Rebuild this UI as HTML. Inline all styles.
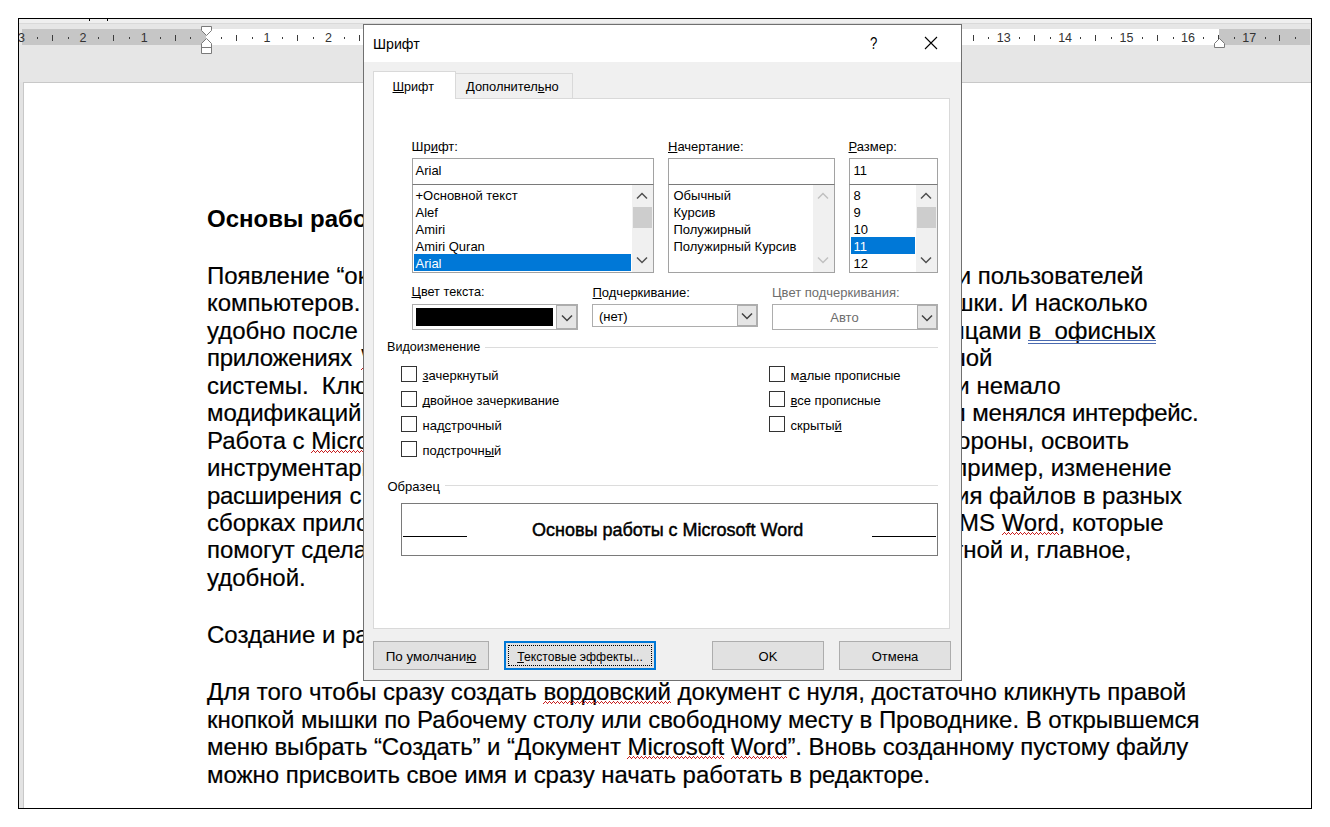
<!DOCTYPE html>
<html><head><meta charset="utf-8"><style>
html,body{margin:0;padding:0;width:1330px;height:827px;overflow:hidden;background:#fff;}
body{position:relative;font-family:'Liberation Sans', sans-serif;}
.b{position:absolute;}
.t{position:absolute;white-space:nowrap;font-family:'Liberation Sans', sans-serif;}
.rn{position:absolute;top:30px;width:40px;text-align:center;font-size:12.5px;line-height:16px;color:#333;font-family:'Liberation Sans', sans-serif;}
u{text-decoration:underline;text-underline-offset:1px;text-decoration-skip-ink:none;}
.wv{position:relative;}
.wv::after{content:'';position:absolute;left:0;right:0;top:23px;height:3px;background:repeating-linear-gradient(90deg,transparent 0 2px,#c81e1e 2px 3px,transparent 3px 4px) 0 0/100% 1px no-repeat,repeating-linear-gradient(90deg,transparent 0 1px,#c81e1e 1px 2px,transparent 2px 3px,#c81e1e 3px 4px) 0 1px/100% 1px no-repeat,repeating-linear-gradient(90deg,#c81e1e 0 1px,transparent 1px 4px) 0 2px/100% 1px no-repeat;}
.du{position:relative;}
.du::after{content:'';position:absolute;left:0;right:0;top:23px;height:4px;border-top:1px solid #4a6ab0;border-bottom:1px solid #4a6ab0;box-sizing:border-box;}
</style></head><body>
<div class="b" style="left:18px;top:18px;width:1294px;height:791px;background:#fff;"></div><div class="b" style="left:19px;top:19px;width:1292px;height:5px;background:#efefef;"></div><div class="b" style="left:19px;top:23px;width:1292px;height:1px;background:#d9d9d9;"></div><div class="b" style="left:19px;top:24px;width:1292px;height:58px;background:#e6e6e6;"></div><div class="b" style="left:22px;top:29px;width:184px;height:16px;background:#c6c6c6;"></div><div class="b" style="left:206px;top:29px;width:1013px;height:16px;background:#fff;"></div><div class="b" style="left:1219px;top:29px;width:91px;height:16px;background:#c6c6c6;"></div><div class="b" style="left:19px;top:82px;width:1292px;height:726px;background:#fff;"></div><div class="b" style="left:19px;top:82px;width:4px;height:726px;background:#e3e3e3;"></div><div class="b" style="left:23px;top:82px;width:1px;height:726px;background:#c8c8c8;"></div><div class="b" style="left:23px;top:82px;width:1288px;height:1px;background:#c8c8c8;"></div><div class="b" style="left:18px;top:18px;width:1294px;height:1px;background:#000;"></div><div class="b" style="left:18px;top:808px;width:1294px;height:1px;background:#000;"></div><div class="b" style="left:18px;top:18px;width:1px;height:791px;background:#000;"></div><div class="b" style="left:1311px;top:18px;width:1px;height:791px;background:#000;"></div><div class="b" style="left:89px;top:19px;width:1px;height:2px;background:#000;"></div><div class="b" style="left:107px;top:19px;width:1px;height:2px;background:#000;"></div><div class="b" style="left:19px;top:19px;width:1292px;height:40px;overflow:hidden;"><div class="b" style="left:-19px;top:-19px;width:1330px;height:60px;"><div class="rn" style="left:1.5px;">3</div><div class="b" style="left:37px;top:37px;width:1px;height:2px;background:#3c3c3c;"></div><div class="b" style="left:52px;top:35px;width:1px;height:6px;background:#3c3c3c;"></div><div class="b" style="left:68px;top:37px;width:1px;height:2px;background:#3c3c3c;"></div><div class="rn" style="left:62.9px;">2</div><div class="b" style="left:98px;top:37px;width:1px;height:2px;background:#3c3c3c;"></div><div class="b" style="left:113px;top:35px;width:1px;height:6px;background:#3c3c3c;"></div><div class="b" style="left:129px;top:37px;width:1px;height:2px;background:#3c3c3c;"></div><div class="rn" style="left:124.3px;">1</div><div class="b" style="left:160px;top:37px;width:1px;height:2px;background:#3c3c3c;"></div><div class="b" style="left:175px;top:35px;width:1px;height:6px;background:#3c3c3c;"></div><div class="b" style="left:190px;top:37px;width:1px;height:2px;background:#3c3c3c;"></div><div class="b" style="left:221px;top:37px;width:1px;height:2px;background:#3c3c3c;"></div><div class="b" style="left:236px;top:35px;width:1px;height:6px;background:#3c3c3c;"></div><div class="b" style="left:252px;top:37px;width:1px;height:2px;background:#3c3c3c;"></div><div class="rn" style="left:247.1px;">1</div><div class="b" style="left:282px;top:37px;width:1px;height:2px;background:#3c3c3c;"></div><div class="b" style="left:297px;top:35px;width:1px;height:6px;background:#3c3c3c;"></div><div class="b" style="left:313px;top:37px;width:1px;height:2px;background:#3c3c3c;"></div><div class="rn" style="left:308.5px;">2</div><div class="b" style="left:344px;top:37px;width:1px;height:2px;background:#3c3c3c;"></div><div class="b" style="left:359px;top:35px;width:1px;height:6px;background:#3c3c3c;"></div><div class="b" style="left:375px;top:37px;width:1px;height:2px;background:#3c3c3c;"></div><div class="rn" style="left:369.9px;">3</div><div class="b" style="left:405px;top:37px;width:1px;height:2px;background:#3c3c3c;"></div><div class="b" style="left:420px;top:35px;width:1px;height:6px;background:#3c3c3c;"></div><div class="b" style="left:436px;top:37px;width:1px;height:2px;background:#3c3c3c;"></div><div class="rn" style="left:431.2px;">4</div><div class="b" style="left:467px;top:37px;width:1px;height:2px;background:#3c3c3c;"></div><div class="b" style="left:481px;top:35px;width:1px;height:6px;background:#3c3c3c;"></div><div class="b" style="left:497px;top:37px;width:1px;height:2px;background:#3c3c3c;"></div><div class="rn" style="left:492.6px;">5</div><div class="b" style="left:528px;top:37px;width:1px;height:2px;background:#3c3c3c;"></div><div class="b" style="left:543px;top:35px;width:1px;height:6px;background:#3c3c3c;"></div><div class="b" style="left:559px;top:37px;width:1px;height:2px;background:#3c3c3c;"></div><div class="rn" style="left:554.0px;">6</div><div class="b" style="left:589px;top:37px;width:1px;height:2px;background:#3c3c3c;"></div><div class="b" style="left:604px;top:35px;width:1px;height:6px;background:#3c3c3c;"></div><div class="b" style="left:620px;top:37px;width:1px;height:2px;background:#3c3c3c;"></div><div class="rn" style="left:615.4px;">7</div><div class="b" style="left:651px;top:37px;width:1px;height:2px;background:#3c3c3c;"></div><div class="b" style="left:666px;top:35px;width:1px;height:6px;background:#3c3c3c;"></div><div class="b" style="left:681px;top:37px;width:1px;height:2px;background:#3c3c3c;"></div><div class="rn" style="left:676.8px;">8</div><div class="b" style="left:712px;top:37px;width:1px;height:2px;background:#3c3c3c;"></div><div class="b" style="left:727px;top:35px;width:1px;height:6px;background:#3c3c3c;"></div><div class="b" style="left:743px;top:37px;width:1px;height:2px;background:#3c3c3c;"></div><div class="rn" style="left:738.2px;">9</div><div class="b" style="left:774px;top:37px;width:1px;height:2px;background:#3c3c3c;"></div><div class="b" style="left:788px;top:35px;width:1px;height:6px;background:#3c3c3c;"></div><div class="b" style="left:804px;top:37px;width:1px;height:2px;background:#3c3c3c;"></div><div class="rn" style="left:799.5px;">10</div><div class="b" style="left:835px;top:37px;width:1px;height:2px;background:#3c3c3c;"></div><div class="b" style="left:850px;top:35px;width:1px;height:6px;background:#3c3c3c;"></div><div class="b" style="left:866px;top:37px;width:1px;height:2px;background:#3c3c3c;"></div><div class="rn" style="left:860.9px;">11</div><div class="b" style="left:896px;top:37px;width:1px;height:2px;background:#3c3c3c;"></div><div class="b" style="left:911px;top:35px;width:1px;height:6px;background:#3c3c3c;"></div><div class="b" style="left:927px;top:37px;width:1px;height:2px;background:#3c3c3c;"></div><div class="rn" style="left:922.3px;">12</div><div class="b" style="left:958px;top:37px;width:1px;height:2px;background:#3c3c3c;"></div><div class="b" style="left:973px;top:35px;width:1px;height:6px;background:#3c3c3c;"></div><div class="b" style="left:988px;top:37px;width:1px;height:2px;background:#3c3c3c;"></div><div class="rn" style="left:983.7px;">13</div><div class="b" style="left:1019px;top:37px;width:1px;height:2px;background:#3c3c3c;"></div><div class="b" style="left:1034px;top:35px;width:1px;height:6px;background:#3c3c3c;"></div><div class="b" style="left:1050px;top:37px;width:1px;height:2px;background:#3c3c3c;"></div><div class="rn" style="left:1045.1px;">14</div><div class="b" style="left:1080px;top:37px;width:1px;height:2px;background:#3c3c3c;"></div><div class="b" style="left:1095px;top:35px;width:1px;height:6px;background:#3c3c3c;"></div><div class="b" style="left:1111px;top:37px;width:1px;height:2px;background:#3c3c3c;"></div><div class="rn" style="left:1106.5px;">15</div><div class="b" style="left:1142px;top:37px;width:1px;height:2px;background:#3c3c3c;"></div><div class="b" style="left:1157px;top:35px;width:1px;height:6px;background:#3c3c3c;"></div><div class="b" style="left:1173px;top:37px;width:1px;height:2px;background:#3c3c3c;"></div><div class="rn" style="left:1167.9px;">16</div><div class="b" style="left:1203px;top:37px;width:1px;height:2px;background:#3c3c3c;"></div><div class="b" style="left:1218px;top:35px;width:1px;height:6px;background:#3c3c3c;"></div><div class="b" style="left:1234px;top:37px;width:1px;height:2px;background:#3c3c3c;"></div><div class="rn" style="left:1229.2px;">17</div><div class="b" style="left:1265px;top:37px;width:1px;height:2px;background:#3c3c3c;"></div><div class="b" style="left:1279px;top:35px;width:1px;height:6px;background:#3c3c3c;"></div><div class="b" style="left:1295px;top:37px;width:1px;height:2px;background:#3c3c3c;"></div></div></div><svg class="b" style="left:199px;top:24px;" width="16" height="32" viewBox="0 0 16 32">
<path d="M2.5 2.5 H12.5 V6.5 L7.5 11.5 L2.5 6.5 Z" fill="#fff" stroke="#7a7a7a" stroke-width="1" stroke-linejoin="miter"/>
<path d="M7.5 14.5 L12.5 19.5 V29.5 H2.5 V19.5 Z" fill="#fff" stroke="#7a7a7a" stroke-width="1"/>
<path d="M2.5 23.5 H12.5" fill="none" stroke="#7a7a7a" stroke-width="1"/>
</svg><svg class="b" style="left:1212px;top:34px;" width="16" height="16" viewBox="0 0 16 16">
<path d="M7.5 4.5 L12.5 9.5 V13.5 H2.5 V9.5 Z" fill="#fff" stroke="#7a7a7a" stroke-width="1"/>
</svg><div class="t " style="left:207px;top:206.68px;font-size:24px;line-height:24px;font-weight:bold;color:#000;white-space:pre;">Основы работы с Microsoft Word</div><div class="t " style="left:207px;top:263.68px;font-size:24px;line-height:24px;font-weight:normal;color:#000;white-space:pre;-webkit-text-stroke:0.2px #000;letter-spacing:-0.04px;">Появление “окон” в</div><div class="t " style="left:207px;top:290.68px;font-size:24px;line-height:24px;font-weight:normal;color:#000;white-space:pre;-webkit-text-stroke:0.2px #000;letter-spacing:-0.04px;">компьютеров. Удобство</div><div class="t " style="left:207px;top:318.68px;font-size:24px;line-height:24px;font-weight:normal;color:#000;white-space:pre;-webkit-text-stroke:0.2px #000;letter-spacing:-0.04px;">удобно после работы</div><div class="t " style="left:207px;top:345.68px;font-size:24px;line-height:24px;font-weight:normal;color:#000;white-space:pre;-webkit-text-stroke:0.2px #000;letter-spacing:-0.3px;word-spacing:3px;">приложениях <span class="wv">Windows</span></div><div class="t " style="left:207px;top:373.68px;font-size:24px;line-height:24px;font-weight:normal;color:#000;white-space:pre;-webkit-text-stroke:0.2px #000;letter-spacing:-0.04px;">системы.  Ключевой</div><div class="t " style="left:207px;top:400.68px;font-size:24px;line-height:24px;font-weight:normal;color:#000;white-space:pre;-webkit-text-stroke:0.2px #000;letter-spacing:-0.04px;">модификаций. Изменялся</div><div class="t " style="left:207px;top:428.68px;font-size:24px;line-height:24px;font-weight:normal;color:#000;white-space:pre;-webkit-text-stroke:0.2px #000;letter-spacing:-0.04px;">Работа с <span class="wv">Microsoft</span> Word</div><div class="t " style="left:207px;top:455.68px;font-size:24px;line-height:24px;font-weight:normal;color:#000;white-space:pre;-webkit-text-stroke:0.2px #000;letter-spacing:-0.04px;">инструментарий</div><div class="t " style="left:207px;top:483.68px;font-size:24px;line-height:24px;font-weight:normal;color:#000;white-space:pre;-webkit-text-stroke:0.2px #000;letter-spacing:-0.3px;word-spacing:-2.5px;">расширения  с помощью</div><div class="t " style="left:207px;top:510.68px;font-size:24px;line-height:24px;font-weight:normal;color:#000;white-space:pre;-webkit-text-stroke:0.2px #000;letter-spacing:-0.04px;">сборках приложения</div><div class="t " style="left:207px;top:537.68px;font-size:24px;line-height:24px;font-weight:normal;color:#000;white-space:pre;-webkit-text-stroke:0.2px #000;letter-spacing:-0.04px;">помогут сделать</div><div class="t " style="left:207px;top:565.68px;font-size:24px;line-height:24px;font-weight:normal;color:#000;white-space:pre;-webkit-text-stroke:0.2px #000;letter-spacing:-0.04px;">удобной.</div><div class="t" style="right:186.5px;top:263.68px;font-size:24px;line-height:24px;font-weight:normal;color:#000;white-space:pre;-webkit-text-stroke:0.2px #000;">изменило жизни пользователей</div><div class="t" style="right:182.5px;top:290.68px;font-size:24px;line-height:24px;font-weight:normal;color:#000;white-space:pre;-webkit-text-stroke:0.2px #000;">работы мышки. И насколько</div><div class="t" style="right:174.5px;top:318.68px;font-size:24px;line-height:24px;font-weight:normal;color:#000;white-space:pre;-webkit-text-stroke:0.2px #000;">с таблицами <span class="du">в  офисных</span></div><div class="t" style="right:337.5px;top:345.68px;font-size:24px;line-height:24px;font-weight:normal;color:#000;white-space:pre;-webkit-text-stroke:0.2px #000;">операционной</div><div class="t" style="right:269.5px;top:373.68px;font-size:24px;line-height:24px;font-weight:normal;color:#000;white-space:pre;-webkit-text-stroke:0.2px #000;">претерпел и немало</div><div class="t" style="right:131.5px;top:400.68px;font-size:24px;line-height:24px;font-weight:normal;color:#000;white-space:pre;-webkit-text-stroke:0.2px #000;">версиями <span style="letter-spacing:-0.27px">менялся интерфейс.</span></div><div class="t" style="right:201px;top:428.68px;font-size:24px;line-height:24px;font-weight:normal;color:#000;white-space:pre;-webkit-text-stroke:0.2px #000;">с другой стороны, освоить</div><div class="t" style="right:158.5px;top:455.68px;font-size:24px;line-height:24px;font-weight:normal;color:#000;white-space:pre;-webkit-text-stroke:0.2px #000;">например, изменение</div><div class="t" style="right:148px;top:483.68px;font-size:24px;line-height:24px;font-weight:normal;color:#000;white-space:pre;-webkit-text-stroke:0.2px #000;">сохранения файлов в разных</div><div class="t" style="right:166.5px;top:510.68px;font-size:24px;line-height:24px;font-weight:normal;color:#000;white-space:pre;-webkit-text-stroke:0.2px #000;">версиях MS <span class="wv">Word</span>, которые</div><div class="t" style="right:198.5px;top:537.68px;font-size:24px;line-height:24px;font-weight:normal;color:#000;white-space:pre;-webkit-text-stroke:0.2px #000;">работу приятной и, главное,</div><div class="t " style="left:207px;top:622.68px;font-size:24px;line-height:24px;font-weight:normal;color:#000;white-space:pre;-webkit-text-stroke:0.2px #000;">Создание и работа с документом</div><div class="t " style="left:207px;top:679.68px;font-size:24px;line-height:24px;font-weight:normal;color:#000;white-space:pre;-webkit-text-stroke:0.2px #000;letter-spacing:-0.024px;">Для того чтобы сразу создать <span class="wv">вордовский</span> документ с нуля, достаточно кликнуть правой</div><div class="t " style="left:207px;top:707.68px;font-size:24px;line-height:24px;font-weight:normal;color:#000;white-space:pre;-webkit-text-stroke:0.2px #000;letter-spacing:-0.050px;">кнопкой мышки по Рабочему столу или свободному месту в Проводнике. В открывшемся</div><div class="t " style="left:207px;top:734.68px;font-size:24px;line-height:24px;font-weight:normal;color:#000;white-space:pre;-webkit-text-stroke:0.2px #000;letter-spacing:-0.070px;">меню выбрать “Создать” и “Документ <span class="wv">Microsoft</span> <span class="wv">Word</span>”. Вновь созданному пустому файлу</div><div class="t " style="left:207px;top:762.68px;font-size:24px;line-height:24px;font-weight:normal;color:#000;white-space:pre;-webkit-text-stroke:0.2px #000;letter-spacing:-0.033px;">можно присвоить свое имя и сразу начать работать в редакторе.</div><div class="b" style="left:363px;top:24px;width:599px;height:657px;background:#f0f0f0;border:1px solid #707070;box-sizing:border-box;"></div><div class="b" style="left:364px;top:25px;width:597px;height:37px;background:#fff;"></div><div class="t " style="left:373px;top:36.98px;font-size:14.2px;line-height:14.2px;font-weight:normal;color:#000;">Шрифт</div><div class="t " style="left:870px;top:35.03px;font-size:16.5px;line-height:16.5px;font-weight:normal;color:#000;transform:scaleX(0.8);transform-origin:0 0;">?</div><svg class="b" style="left:924px;top:36px;" width="14" height="14" viewBox="0 0 14 14">
<path d="M1 1 L13 13 M13 1 L1 13" stroke="#000" stroke-width="1.1" fill="none"/></svg><div class="b" style="left:373px;top:98px;width:577px;height:531px;background:#fff;border:1px solid #d9d9d9;box-sizing:border-box;"></div><div class="b" style="left:455px;top:73px;width:118px;height:26px;background:#f0f0f0;border:1px solid #d9d9d9;box-sizing:border-box;"></div><div class="b" style="left:373px;top:71px;width:83px;height:28px;background:#fff;border:1px solid #d9d9d9;border-bottom:none;box-sizing:border-box;"></div><div class="t " style="left:392.5px;top:81.33px;font-size:12.6px;line-height:12.6px;font-weight:normal;color:#000;"><u>Ш</u>рифт</div><div class="t " style="left:466px;top:81.08px;font-size:12.9px;line-height:12.9px;font-weight:normal;color:#000;">Дополнител<u>ь</u>но</div><div class="t " style="left:411.5px;top:140.00px;font-size:13px;line-height:13px;font-weight:normal;color:#000;">Шр<u>и</u>фт:</div><div class="t " style="left:668px;top:140.00px;font-size:13px;line-height:13px;font-weight:normal;color:#000;"><u>Н</u>ачертание:</div><div class="t " style="left:848.5px;top:140.00px;font-size:13px;line-height:13px;font-weight:normal;color:#000;"><u>Р</u>азмер:</div><div class="b" style="left:412px;top:158px;width:242px;height:27px;background:#fff;border:1px solid #a2a2a2;border-bottom-color:#7a7a7a;box-sizing:border-box;"></div><div class="t " style="left:415.5px;top:164.00px;font-size:13px;line-height:13px;font-weight:normal;color:#000;">Arial</div><div class="b" style="left:412px;top:185px;width:242px;height:88px;background:#fff;border:1px solid #a2a2a2;border-top:none;box-sizing:border-box;"></div><div class="b" style="left:668px;top:158px;width:167px;height:27px;background:#fff;border:1px solid #a2a2a2;border-bottom-color:#7a7a7a;box-sizing:border-box;"></div><div class="b" style="left:668px;top:185px;width:167px;height:88px;background:#fff;border:1px solid #a2a2a2;border-top:none;box-sizing:border-box;"></div><div class="b" style="left:849px;top:158px;width:89px;height:27px;background:#fff;border:1px solid #a2a2a2;border-bottom-color:#7a7a7a;box-sizing:border-box;"></div><div class="t " style="left:853.5px;top:164.00px;font-size:13px;line-height:13px;font-weight:normal;color:#000;">11</div><div class="b" style="left:849px;top:185px;width:89px;height:88px;background:#fff;border:1px solid #a2a2a2;border-top:none;box-sizing:border-box;"></div><div class="b" style="left:414px;top:254px;width:217px;height:17px;background:#0078d7;"></div><div class="t " style="left:415.5px;top:189.00px;font-size:13px;line-height:13px;font-weight:normal;color:#000;">+Основной текст</div><div class="t " style="left:415.5px;top:206.00px;font-size:13px;line-height:13px;font-weight:normal;color:#000;">Alef</div><div class="t " style="left:415.5px;top:223.00px;font-size:13px;line-height:13px;font-weight:normal;color:#000;">Amiri</div><div class="t " style="left:415.5px;top:240.00px;font-size:13px;line-height:13px;font-weight:normal;color:#000;">Amiri Quran</div><div class="t " style="left:415.5px;top:257.00px;font-size:13px;line-height:13px;font-weight:normal;color:#fff;">Arial</div><div class="b" style="left:632px;top:185px;width:21px;height:87px;background:#f0f0f0;"></div><div class="b" style="left:633px;top:207px;width:19px;height:21px;background:#cdcdcd;"></div><svg class="b" style="left:636px;top:192px;" width="12" height="8" viewBox="0 0 12 8"><path d="M1 6.5 L6 1.5 L11 6.5" stroke="#505050" stroke-width="1.5" fill="none"/></svg><svg class="b" style="left:636px;top:256px;" width="12" height="8" viewBox="0 0 12 8"><path d="M1 1.5 L6 6.5 L11 1.5" stroke="#505050" stroke-width="1.5" fill="none"/></svg><div class="t " style="left:673.5px;top:189.00px;font-size:13px;line-height:13px;font-weight:normal;color:#000;">Обычный</div><div class="t " style="left:673.5px;top:206.00px;font-size:13px;line-height:13px;font-weight:normal;color:#000;">Курсив</div><div class="t " style="left:673.5px;top:223.00px;font-size:13px;line-height:13px;font-weight:normal;color:#000;">Полужирный</div><div class="t " style="left:673.5px;top:240.00px;font-size:13px;line-height:13px;font-weight:normal;color:#000;">Полужирный Курсив</div><div class="b" style="left:813px;top:185px;width:21px;height:87px;background:#f0f0f0;"></div><svg class="b" style="left:817px;top:192px;" width="12" height="8" viewBox="0 0 12 8"><path d="M1 6.5 L6 1.5 L11 6.5" stroke="#c0c0c0" stroke-width="1.5" fill="none"/></svg><svg class="b" style="left:817px;top:256px;" width="12" height="8" viewBox="0 0 12 8"><path d="M1 1.5 L6 6.5 L11 1.5" stroke="#c0c0c0" stroke-width="1.5" fill="none"/></svg><div class="b" style="left:851px;top:237px;width:64px;height:17px;background:#0078d7;"></div><div class="t " style="left:853.5px;top:189.00px;font-size:13px;line-height:13px;font-weight:normal;color:#000;">8</div><div class="t " style="left:853.5px;top:206.00px;font-size:13px;line-height:13px;font-weight:normal;color:#000;">9</div><div class="t " style="left:853.5px;top:223.00px;font-size:13px;line-height:13px;font-weight:normal;color:#000;">10</div><div class="t " style="left:853.5px;top:240.00px;font-size:13px;line-height:13px;font-weight:normal;color:#fff;">11</div><div class="t " style="left:853.5px;top:257.00px;font-size:13px;line-height:13px;font-weight:normal;color:#000;">12</div><div class="b" style="left:916px;top:185px;width:21px;height:87px;background:#f0f0f0;"></div><div class="b" style="left:917px;top:207px;width:19px;height:21px;background:#cdcdcd;"></div><svg class="b" style="left:920px;top:192px;" width="12" height="8" viewBox="0 0 12 8"><path d="M1 6.5 L6 1.5 L11 6.5" stroke="#505050" stroke-width="1.5" fill="none"/></svg><svg class="b" style="left:920px;top:256px;" width="12" height="8" viewBox="0 0 12 8"><path d="M1 1.5 L6 6.5 L11 1.5" stroke="#505050" stroke-width="1.5" fill="none"/></svg><div class="t " style="left:411.5px;top:286.25px;font-size:12.7px;line-height:12.7px;font-weight:normal;color:#000;"><u>Ц</u>вет текста:</div><div class="t " style="left:592.5px;top:286.00px;font-size:13px;line-height:13px;font-weight:normal;color:#000;"><u>П</u>одчеркивание:</div><div class="t " style="left:772px;top:286.00px;font-size:13px;line-height:13px;font-weight:normal;color:#6d6d6d;">Цвет подчеркивания:</div><div class="b" style="left:412px;top:304px;width:166px;height:26px;background:#fff;border:1px solid #adadad;box-sizing:border-box;"></div><div class="b" style="left:416px;top:308px;width:137px;height:18px;background:#000;"></div><div class="b" style="left:556px;top:305px;width:21px;height:24px;background:#e5e5e5;border:1px solid #adadad;box-sizing:border-box;"></div><svg class="b" style="left:561px;top:314px;" width="12" height="8" viewBox="0 0 12 8"><path d="M1 1.5 L6 6.5 L11 1.5" stroke="#404040" stroke-width="1.5" fill="none"/></svg><div class="b" style="left:592px;top:304px;width:166px;height:23px;background:#fff;border:1px solid #adadad;box-sizing:border-box;"></div><div class="t " style="left:599px;top:310.00px;font-size:13px;line-height:13px;font-weight:normal;color:#000;">(нет)</div><div class="b" style="left:737px;top:305px;width:20px;height:21px;background:#e5e5e5;border:1px solid #adadad;box-sizing:border-box;"></div><svg class="b" style="left:741px;top:312px;" width="12" height="8" viewBox="0 0 12 8"><path d="M1 1.5 L6 6.5 L11 1.5" stroke="#404040" stroke-width="1.5" fill="none"/></svg><div class="b" style="left:772px;top:304px;width:166px;height:26px;background:#fff;border:1px solid #adadad;box-sizing:border-box;"></div><div class="t" style="left:772px;width:145px;text-align:center;top:311.00px;font-size:13px;line-height:13px;color:#6d6d6d;">Авто</div><div class="b" style="left:917px;top:305px;width:20px;height:24px;background:#e5e5e5;border:1px solid #adadad;box-sizing:border-box;"></div><svg class="b" style="left:921px;top:314px;" width="12" height="8" viewBox="0 0 12 8"><path d="M1 1.5 L6 6.5 L11 1.5" stroke="#404040" stroke-width="1.5" fill="none"/></svg><div class="t " style="left:387px;top:341.33px;font-size:12.6px;line-height:12.6px;font-weight:normal;color:#000;">Видоизменение</div><div class="b" style="left:485px;top:347px;width:453px;height:1px;background:#dcdcdc;"></div><div class="b" style="left:401px;top:366px;width:16px;height:16px;background:#fff;border:1px solid #333;box-sizing:border-box;"></div><div class="t " style="left:422.5px;top:369.00px;font-size:13px;line-height:13px;font-weight:normal;color:#000;"><u>з</u>ачеркнутый</div><div class="b" style="left:401px;top:391px;width:16px;height:16px;background:#fff;border:1px solid #333;box-sizing:border-box;"></div><div class="t " style="left:422.5px;top:394.00px;font-size:13px;line-height:13px;font-weight:normal;color:#000;"><u>д</u>войное зачеркивание</div><div class="b" style="left:401px;top:416px;width:16px;height:16px;background:#fff;border:1px solid #333;box-sizing:border-box;"></div><div class="t " style="left:422.5px;top:419.00px;font-size:13px;line-height:13px;font-weight:normal;color:#000;">над<u>с</u>трочный</div><div class="b" style="left:401px;top:441px;width:16px;height:16px;background:#fff;border:1px solid #333;box-sizing:border-box;"></div><div class="t " style="left:422.5px;top:444.00px;font-size:13px;line-height:13px;font-weight:normal;color:#000;">подстрочн<u>ы</u>й</div><div class="b" style="left:769px;top:366px;width:16px;height:16px;background:#fff;border:1px solid #333;box-sizing:border-box;"></div><div class="t " style="left:790.5px;top:369.00px;font-size:13px;line-height:13px;font-weight:normal;color:#000;">м<u>а</u>лые прописные</div><div class="b" style="left:769px;top:391px;width:16px;height:16px;background:#fff;border:1px solid #333;box-sizing:border-box;"></div><div class="t " style="left:790.5px;top:394.00px;font-size:13px;line-height:13px;font-weight:normal;color:#000;"><u>в</u>се прописные</div><div class="b" style="left:769px;top:416px;width:16px;height:16px;background:#fff;border:1px solid #333;box-sizing:border-box;"></div><div class="t " style="left:790.5px;top:419.00px;font-size:13px;line-height:13px;font-weight:normal;color:#000;">скрыты<u>й</u></div><div class="t " style="left:387.5px;top:480.00px;font-size:13px;line-height:13px;font-weight:normal;color:#000;">Образец</div><div class="b" style="left:445px;top:485px;width:493px;height:1px;background:#dcdcdc;"></div><div class="b" style="left:401px;top:503px;width:537px;height:53px;background:#fff;border:1px solid #7a7a7a;box-sizing:border-box;"></div><div class="b" style="left:403px;top:536px;width:64px;height:1px;background:#000;"></div><div class="b" style="left:872px;top:536px;width:64px;height:1px;background:#000;"></div><div class="t " style="left:532px;top:520.76px;font-size:18px;line-height:18px;font-weight:normal;color:#000;white-space:pre;-webkit-text-stroke:0.45px #000;">Основы работы с Microsoft Word</div><div class="b" style="left:373px;top:641px;width:116px;height:29px;background:#e1e1e1;border:1px solid #adadad;box-sizing:border-box;"></div><div class="t" style="left:373px;width:116px;text-align:center;top:649.66px;font-size:13.4px;line-height:13.4px;">По умолчани<u>ю</u></div><div class="b" style="left:504px;top:641px;width:152px;height:29px;background:#e1e1e1;border:2px solid #0078d7;box-sizing:border-box;"></div><div class="b" style="left:508px;top:645px;width:144px;height:21px;border:1px dotted #000;box-sizing:border-box;"></div><div class="t" style="left:504px;width:152px;text-align:center;top:650.67px;font-size:12.2px;line-height:12.2px;"><u>Т</u>екстовые эффекты...</div><div class="b" style="left:712px;top:641px;width:112px;height:29px;background:#e1e1e1;border:1px solid #adadad;box-sizing:border-box;"></div><div class="t" style="left:712px;width:112px;text-align:center;top:650.00px;font-size:13px;line-height:13px;">OK</div><div class="b" style="left:839px;top:641px;width:112px;height:29px;background:#e1e1e1;border:1px solid #adadad;box-sizing:border-box;"></div><div class="t" style="left:839px;width:112px;text-align:center;top:650.00px;font-size:13px;line-height:13px;">Отмена</div>
</body></html>
